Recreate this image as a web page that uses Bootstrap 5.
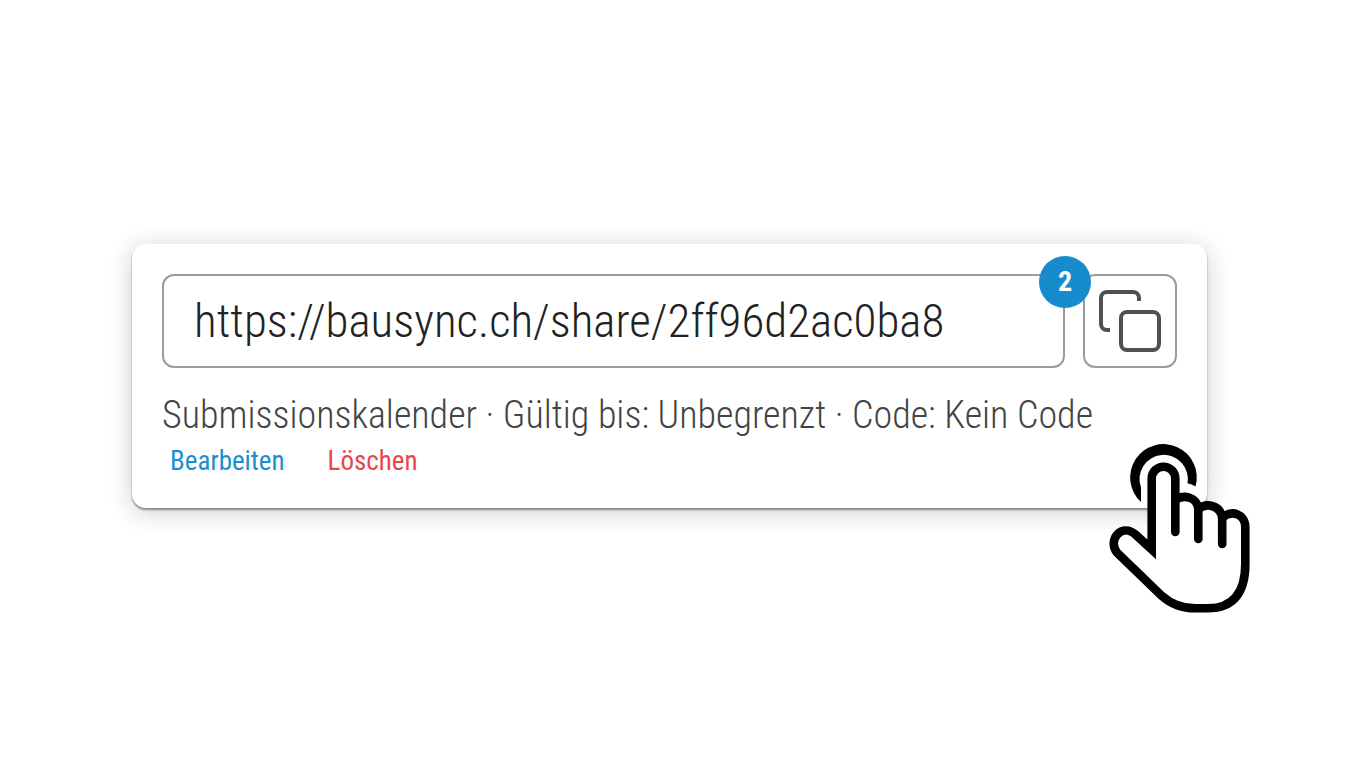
<!DOCTYPE html>
<html lang="de">
<head>
<meta charset="utf-8">
<meta name="viewport" content="width=device-width, initial-scale=1">
<title>Submissionskalender teilen</title>
<link href="https://cdn.jsdelivr.net/npm/bootstrap@5.3.0/dist/css/bootstrap.min.css" rel="stylesheet">
<style>
  body { background: #fff; font-family: "Roboto Condensed", "Liberation Sans Narrow", "Liberation Sans", sans-serif; font-weight: 300; }
  .stage { padding: 0 10.46% 6px 9.8%; }
  .share-card { padding: 30px; border-radius: 14px; box-shadow: 0 2px 2px rgba(0,0,0,.4), 0 4px 26px rgba(0,0,0,.2); }
  .share-row { gap: 18px; }
  .share-url, .copy-btn { height: 94px; border: 2px solid #9b9b9b; border-radius: 12px; background: #fff; }
  .share-url { padding: 0 30px; font-size: 47px; font-weight: 300; color: #222; }
  .copy-btn { width: 94px; color: #505050; }
  .count-badge { width: 52px; height: 52px; top: -18px; right: -26px; z-index: 2; background: #178ccc; font-size: 28px; }
  .share-info { margin-top: 24px; font-size: 38px; line-height: 46px; color: #444; }
  .share-links { gap: 43px; padding-left: 8px; font-size: 27px; font-weight: 400; line-height: 32px; margin: 7px 0 1px; }
  .link-edit { color: #1a8fd0; }
  .link-delete { color: #e8474a; }
  .tap-hand { right: -63px; bottom: -113px; pointer-events: none; }
</style>
</head>
<body>
<main class="stage min-vh-100 d-flex flex-column justify-content-center">
  <section class="share-card card border-0">
    <div class="share-row d-flex">
      <div class="position-relative flex-grow-1">
        <input class="share-url form-control" type="text" readonly aria-label="Link zum Teilen" value="https://bausync.ch/share/2ff96d2ac0ba8">
        <span class="count-badge position-absolute rounded-circle text-white fw-bold d-flex align-items-center justify-content-center">2</span>
      </div>
      <button class="copy-btn btn p-0 flex-shrink-0 d-flex align-items-center justify-content-center" type="button" aria-label="Link kopieren">
        <svg width="64" height="64" viewBox="0 0 64 64" fill="none" stroke="currentColor" stroke-width="4" aria-hidden="true">
          <path d="M41 12V9a6 6 0 0 0-6-6H9a6 6 0 0 0-6 6v26a6 6 0 0 0 6 6h3"/>
          <rect x="23" y="23" width="38" height="38" rx="6"/>
        </svg>
      </button>
    </div>
    <p class="share-info mb-0">Submissionskalender · Gültig bis: Unbegrenzt · Code: Kein Code</p>
    <div class="share-links d-flex">
      <a class="link-edit text-decoration-none" href="#bearbeiten">Bearbeiten</a>
      <a class="link-delete text-decoration-none" href="#loeschen">Löschen</a>
    </div>
    <svg class="tap-hand position-absolute" width="180" height="190" viewBox="0 0 180 190" aria-hidden="true">
      <path d="M51 71A33.300 33.300 0 1 1 105.500 55.500Q102 53 97.500 52.300A24.200 24.200 0 1 0 51 56.500Z"/>
      <path fill="#fff" stroke="#000" stroke-width="8.600" d="M61.700 118.500V47.500a11.800 11.800 0 0 1 23.600 0V69C94 63 107 66 108.300 78C117 71 131 75 132.200 87C141 78 155.300 83 155.300 96V133C155.300 162 143 177.300 118 177.300H105C91 177.300 81 173 72 165L27 121.500C17 109 32 91 46 104Z"/>
      <path fill="none" stroke="#000" stroke-width="8.600" stroke-linecap="round" d="M85.300 66V101M108.300 78V108M132.200 87V113"/>
    </svg>
  </section>
</main>
<script src="https://cdn.jsdelivr.net/npm/bootstrap@5.3.0/dist/js/bootstrap.bundle.min.js"></script>
</body>
</html>
